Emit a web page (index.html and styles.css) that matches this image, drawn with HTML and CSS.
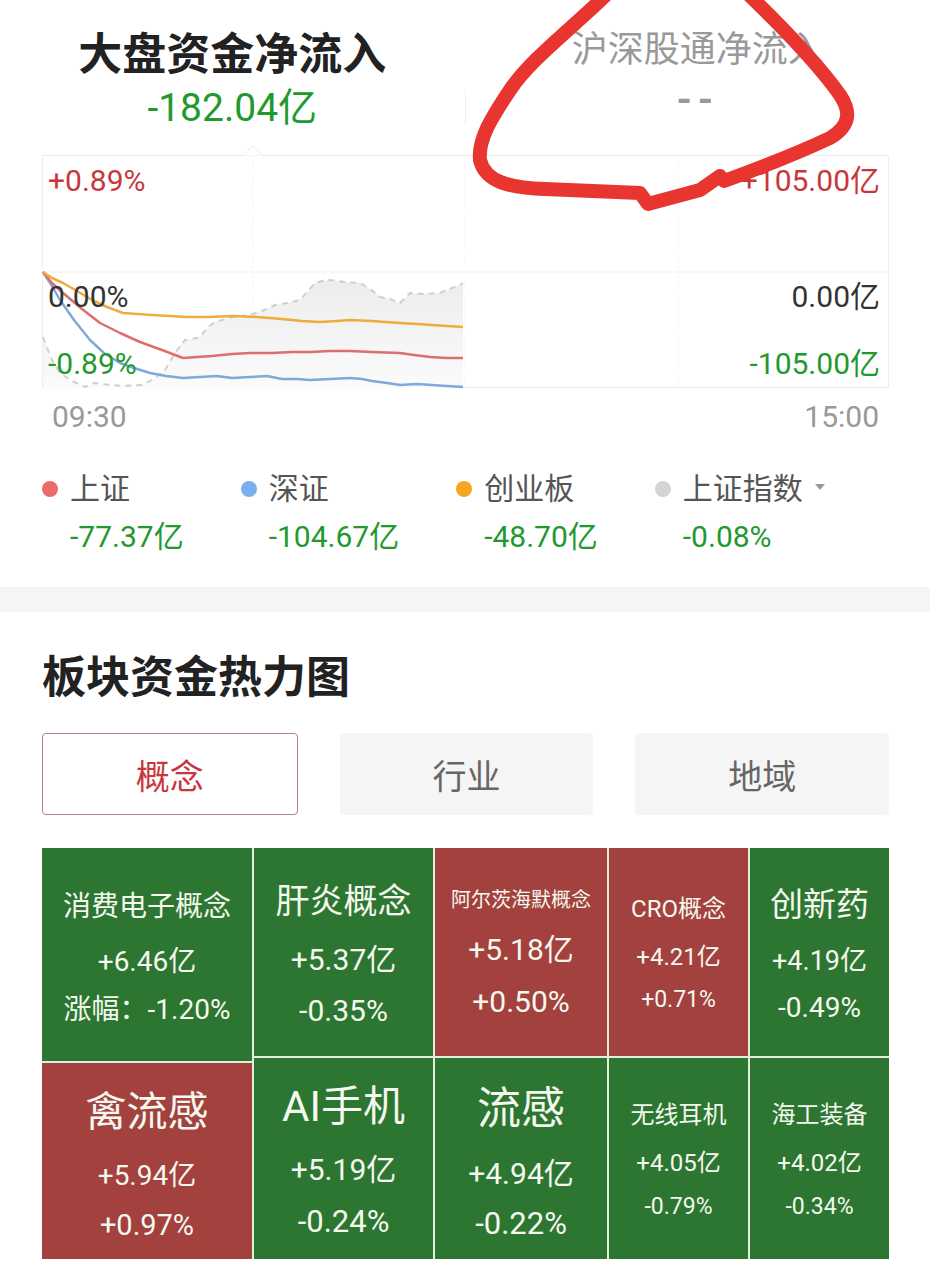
FILE: index.html
```html
<!DOCTYPE html>
<html>
  <head>
    <meta charset="utf-8" />
    <meta content="width=device-width, initial-scale=1" name="viewport" />
    <title>资金流向</title>
    <link rel="stylesheet" href="styles.css">
  </head>
  <body>
    <div class="page">
      <div class="flow-head">
        <div class="head-tab">
          <div class="head-title">大盘资金净流入</div>
          <div class="head-value down">-182.04亿</div>
        </div>
        <div class="head-split"></div>
        <div class="head-tab muted">
          <div class="head-title">沪深股通净流入</div>
          <div class="head-value">--</div>
        </div>
      </div>

      <div class="chart">
        <svg class="chart-plot" width="847" height="233" viewBox="0 0 847 233">
          <defs>
            <linearGradient id="idxfill" x1="0" y1="0" x2="0" y2="1">
              <stop offset="0" stop-color="#ededed"/>
              <stop offset="1" stop-color="#fbfbfb"/>
            </linearGradient>
          </defs>
          <rect x="0.5" y="0.5" width="846" height="232" fill="none" stroke="#ededed"/>
          <path d="M201 0.5 L211 -9 L221 0.5" fill="#fff" stroke="#ededed"/>
          <line x1="1" y1="117" x2="846" y2="117" stroke="#e4e4e4" stroke-dasharray="4 4"/>
          <line x1="211" y1="1" x2="211" y2="232" stroke="#f0f0f0" stroke-dasharray="2 3"/>
          <line x1="423" y1="1" x2="423" y2="232" stroke="#f0f0f0" stroke-dasharray="2 3"/>
          <line x1="636" y1="1" x2="636" y2="232" stroke="#f0f0f0" stroke-dasharray="2 3"/>

          <!-- 上证指数 -->
          <polygon fill="url(#idxfill)" points="1,182 10,205 18,218 30,226 43,232 52,228 60,229 80,231 100,230 112,224 123,215 133,198 143,185 150,184 158,182 166,172 173,167 190,162 208,160 220,156 233,150 245,148 258,145 266,136 273,128 280,126 288,125 302,127 318,128 328,134 338,142 348,144 358,148 363,143 368,138 383,139 398,138 405,135 413,132 418,130 421,128 421,233 1,233"/>
          <polyline fill="none" stroke="#cfcfcf" stroke-width="2" stroke-dasharray="6 5" points="1,182 10,205 18,218 30,226 43,232 52,228 60,229 80,231 100,230 112,224 123,215 133,198 143,185 150,184 158,182 166,172 173,167 190,162 208,160 220,156 233,150 245,148 258,145 266,136 273,128 280,126 288,125 302,127 318,128 328,134 338,142 348,144 358,148 363,143 368,138 383,139 398,138 405,135 413,132 418,130 421,128"/>
          <!-- 深证 -->
          <polyline fill="none" stroke="#7ea9dc" stroke-width="2.5" stroke-linejoin="round" points="1,117 10,131 18,145 32,165 48,185 62,198 78,208 92,213 108,218 124,221 141,223 158,222 175,221 190,223 208,222 225,221 240,224 255,224 268,225 288,224 308,223 320,224 330,226 345,228 358,230 375,229 390,230 405,231 421,232"/>
          <!-- 上证 -->
          <polyline fill="none" stroke="#dc6f6e" stroke-width="2.5" stroke-linejoin="round" points="1,117 10,128 21,138 40,154 58,168 78,178 98,187 120,195 141,203 155,202 170,201 190,199 208,198 230,198 250,197 268,197 288,196 308,196 330,197 358,198 372,200 388,202 405,203 421,203"/>
          <!-- 创业板 -->
          <polyline fill="none" stroke="#f0ab3a" stroke-width="2.5" stroke-linejoin="round" points="1,117 10,123 21,128 35,136 50,145 65,152 81,158 110,160 145,162 168,162 191,161 215,162 240,164 260,166 278,167 295,166 308,165 330,166 358,168 375,169 390,170 405,171 421,172"/>
        </svg>
        <span class="axis l top up">+0.89%</span>
        <span class="axis l mid">0.00%</span>
        <span class="axis l bot down">-0.89%</span>
        <span class="axis r top up">+105.00亿</span>
        <span class="axis r mid">0.00亿</span>
        <span class="axis r bot down">-105.00亿</span>
      </div>

      <div class="chart-time">
        <span>09:30</span>
        <span>15:00</span>
      </div>

      <div class="legend">
        <div class="legend-item">
          <div class="legend-name"><i class="dot sh"></i>上证</div>
          <div class="legend-value down">-77.37亿</div>
        </div>
        <div class="legend-item">
          <div class="legend-name"><i class="dot sz"></i>深证</div>
          <div class="legend-value down">-104.67亿</div>
        </div>
        <div class="legend-item">
          <div class="legend-name"><i class="dot cy"></i>创业板</div>
          <div class="legend-value down">-48.70亿</div>
        </div>
        <div class="legend-item">
          <div class="legend-name"><i class="dot idx"></i>上证指数<i class="caret"></i></div>
          <div class="legend-value down">-0.08%</div>
        </div>
      </div>

      <div class="band"></div>

      <h2 class="section-title">板块资金热力图</h2>

      <div class="tabs">
        <div class="tab on">概念</div>
        <div class="tab">行业</div>
        <div class="tab">地域</div>
      </div>

      <div class="heatmap">
        <div class="hm-col" style="width:210px">
          <div class="tile down sz-1" style="height:213px">
            <span class="t-name">消费电子概念</span>
            <span class="t-flow">+6.46亿</span>
            <span class="t-pct">涨幅：-1.20%</span>
          </div>
          <div class="tile up sz-6">
            <span class="t-name">禽流感</span>
            <span class="t-flow">+5.94亿</span>
            <span class="t-pct">+0.97%</span>
          </div>
        </div>
        <div class="hm-col" style="width:179px">
          <div class="tile down sz-2" style="height:208px">
            <span class="t-name">肝炎概念</span>
            <span class="t-flow">+5.37亿</span>
            <span class="t-pct">-0.35%</span>
          </div>
          <div class="tile down sz-7">
            <span class="t-name">AI手机</span>
            <span class="t-flow">+5.19亿</span>
            <span class="t-pct">-0.24%</span>
          </div>
        </div>
        <div class="hm-col" style="width:172px">
          <div class="tile up sz-3" style="height:208px">
            <span class="t-name">阿尔茨海默概念</span>
            <span class="t-flow">+5.18亿</span>
            <span class="t-pct">+0.50%</span>
          </div>
          <div class="tile down sz-8">
            <span class="t-name">流感</span>
            <span class="t-flow">+4.94亿</span>
            <span class="t-pct">-0.22%</span>
          </div>
        </div>
        <div class="hm-col" style="width:139px">
          <div class="tile up sz-4" style="height:208px">
            <span class="t-name">CRO概念</span>
            <span class="t-flow">+4.21亿</span>
            <span class="t-pct">+0.71%</span>
          </div>
          <div class="tile down sz-9">
            <span class="t-name">无线耳机</span>
            <span class="t-flow">+4.05亿</span>
            <span class="t-pct">-0.79%</span>
          </div>
        </div>
        <div class="hm-col" style="width:139px">
          <div class="tile down sz-5" style="height:208px">
            <span class="t-name">创新药</span>
            <span class="t-flow">+4.19亿</span>
            <span class="t-pct">-0.49%</span>
          </div>
          <div class="tile down sz-9">
            <span class="t-name">海工装备</span>
            <span class="t-flow">+4.02亿</span>
            <span class="t-pct">-0.34%</span>
          </div>
        </div>
      </div>

      <!-- hand-drawn circle over the screenshot -->
      <svg class="scribble" width="930" height="220" viewBox="0 0 930 220">
        <path d="M605 -4 C570 30, 530 60, 510 90 C490 120, 478 140, 480 160 C485 182, 510 188, 545 189 L640 193 L648 204 L700 190 L720 176 L724 181 C760 168, 800 152, 830 138 C852 125, 850 110, 840 95 C815 60, 780 25, 750 -4"
              fill="none" stroke="#e8352f" stroke-width="14" stroke-linecap="round" stroke-linejoin="round"/>
      </svg>
    </div>
  </body>
</html>
```

FILE: styles.css
```css
html, body {
  margin: 0;
  background: #fff;
}
body {
  color: #333;
  font-family: Roboto, "Noto Sans CJK SC", sans-serif;
}
.page {
  position: relative;
  width: 930px;
  height: 1268px;
  overflow: hidden;
}
.up {
  color: #c8373b;
}
.down {
  color: #22992e;
}

/* header */
.flow-head {
  display: flex;
  padding-top: 30px;
}
.head-tab {
  flex: 1;
  text-align: center;
}
.head-title {
  color: #222;
  font-size: 44px;
  font-weight: bold;
  line-height: 50px;
}
.head-value {
  font-size: 39px;
  line-height: 44px;
  margin-top: 6px;
}
.head-tab.muted .head-title {
  color: #999;
  font-size: 36px;
  font-weight: normal;
  line-height: 40px;
}
.head-tab.muted .head-value {
  color: #999;
  font-weight: bold;
  letter-spacing: 6px;
  margin-top: 8px;
}
.head-split {
  background: #f0f0f0;
  margin: 60px 0 5px;
  width: 1px;
}

/* chart */
.chart {
  height: 233px;
  margin: 25px 41px 0 42px;
  position: relative;
}
.chart-plot {
  display: block;
  overflow: visible;
}
.axis {
  font-size: 30px;
  line-height: 30px;
  position: absolute;
}
.axis.l {
  left: 6px;
}
.axis.r {
  right: 9px;
}
.axis.top {
  top: 11px;
}
.axis.mid {
  color: #333;
  top: 127px;
}
.axis.bot {
  top: 194px;
}
.chart-time {
  color: #999;
  display: flex;
  font-size: 30px;
  justify-content: space-between;
  line-height: 34px;
  margin: 12px 51px 0 52px;
}

/* legend */
.legend {
  display: flex;
  gap: 57px;
  margin: 35px 0 0 42px;
}
.legend-name {
  align-items: center;
  color: #555;
  display: flex;
  font-size: 30px;
  line-height: 40px;
}
.dot {
  border-radius: 50%;
  height: 16px;
  margin-right: 12px;
  width: 16px;
}
.dot.sh { background: #ec6b6b; }
.dot.sz { background: #7bb0f0; }
.dot.cy { background: #f5a623; }
.dot.idx { background: #d4d4d4; }
.caret {
  border-left: 5px solid transparent;
  border-right: 5px solid transparent;
  border-top: 6px solid #999;
  margin: 0 0 4px 12px;
}
.legend-value {
  font-size: 30px;
  line-height: 36px;
  margin: 10px 0 0 28px;
}
.band {
  background: #f5f5f5;
  height: 25px;
  margin-top: 32px;
}

/* heat map */
.section-title {
  color: #222;
  font-size: 44px;
  font-weight: bold;
  line-height: 50px;
  margin: 41px 0 0 42px;
}
.tabs {
  display: flex;
  gap: 42px;
  margin: 30px 41px 0 42px;
}
.tab {
  align-items: center;
  background: #f5f5f5;
  border-radius: 4px;
  box-sizing: border-box;
  color: #666;
  display: flex;
  flex: 1;
  font-size: 34px;
  height: 82px;
  justify-content: center;
}
.tab.on {
  background: #fff;
  border: 1px solid #b5807e;
  color: #c7383e;
}
.heatmap {
  background: #e3eddb;
  display: flex;
  gap: 2px;
  height: 411px;
  margin: 33px 41px 0 42px;
}
.hm-col {
  display: flex;
  flex-direction: column;
  gap: 2px;
}
.tile {
  align-items: center;
  color: #f4f8ee;
  display: flex;
  flex-direction: column;
  flex-shrink: 0;
  justify-content: center;
  white-space: nowrap;
}
.tile:last-child {
  flex: 1;
}
.tile.down {
  background: #2d7632;
}
.tile.up {
  background: #a3413f;
}
.t-name {
  font-size: var(--n);
  line-height: var(--nl);
}
.t-flow {
  font-size: var(--f);
  line-height: var(--fl);
}
.t-pct {
  font-size: var(--p);
  line-height: var(--pl);
}
.sz-1 { --n: 28px; --nl: 58px; --f: 28px; --fl: 52px; --p: 28px; --pl: 44px; }
.sz-2 { --n: 34px; --nl: 64px; --f: 30px; --fl: 54px; --p: 30px; --pl: 48px; }
.sz-3 { --n: 20px; --nl: 48px; --f: 30px; --fl: 52px; --p: 30px; --pl: 52px; }
.sz-4 { --n: 24px; --nl: 50px; --f: 24px; --fl: 46px; --p: 23px; --pl: 40px; }
.sz-5 { --n: 33px; --nl: 60px; --f: 27px; --fl: 52px; --p: 28px; --pl: 42px; }
.sz-6 { --n: 41px; --nl: 74px; --f: 28px; --fl: 54px; --p: 29px; --pl: 44px; }
.sz-7 { --n: 42px; --nl: 72px; --f: 30px; --fl: 54px; --p: 31px; --pl: 50px; }
.sz-8 { --n: 44px; --nl: 76px; --f: 30px; --fl: 54px; --p: 31px; --pl: 46px; }
.sz-9 { --n: 24px; --nl: 50px; --f: 24px; --fl: 46px; --p: 23px; --pl: 42px; }

.scribble {
  left: 0;
  pointer-events: none;
  position: absolute;
  top: 0;
}
```
